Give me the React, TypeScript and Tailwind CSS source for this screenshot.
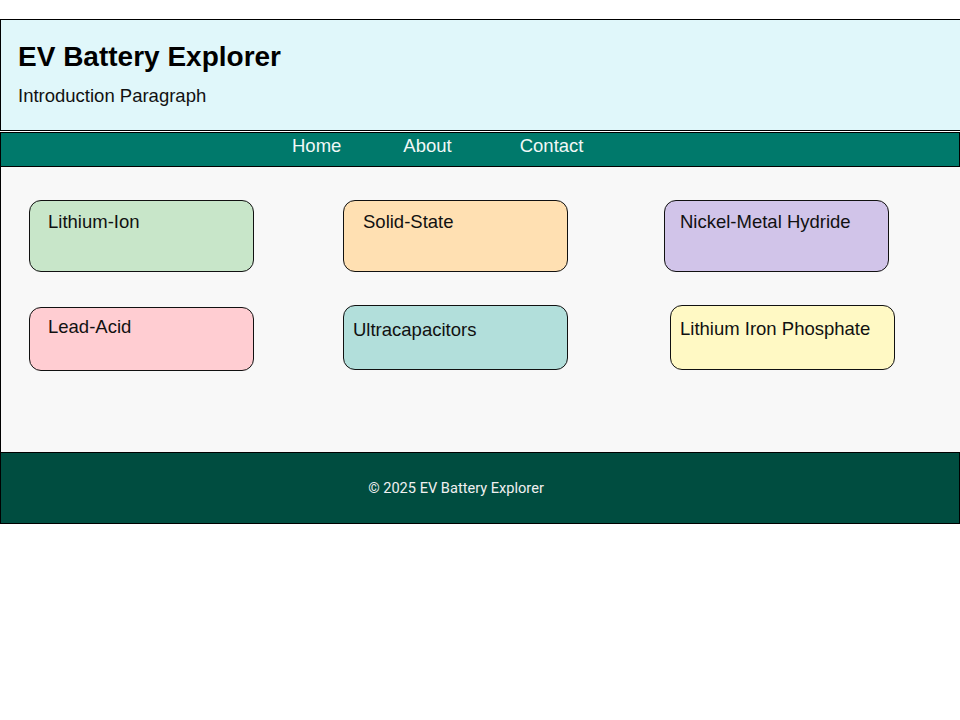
import React from "react";

type Card = { name: string; bg: string; cls: string };

const row1: Card[] = [
  { name: "Lithium-Ion", bg: "bg-[#c8e6c9]", cls: "ml-[28px] h-[72px] pt-[11px] pl-[18px]" },
  { name: "Solid-State", bg: "bg-[#ffe0b2]", cls: "ml-[89px] h-[72px] pt-[11px] pl-[19px]" },
  { name: "Nickel-Metal Hydride", bg: "bg-[#d1c4e9]", cls: "ml-[96px] h-[72px] pt-[11px] pl-[15px]" },
];

const row2: Card[] = [
  { name: "Lead-Acid", bg: "bg-[#ffcdd2]", cls: "ml-[28px] mt-[2px] h-[64px] pt-[9px] pl-[18px]" },
  { name: "Ultracapacitors", bg: "bg-[#b2dfdb]", cls: "ml-[89px] h-[65px] pt-[14px] pl-[9px]" },
  { name: "Lithium Iron Phosphate", bg: "bg-[#fff9c4]", cls: "ml-[102px] h-[65px] pt-[13px] pl-[9px]" },
];

function CardBox({ c }: { c: Card }) {
  return (
    <div
      className={`w-[225px] shrink-0 rounded-[12px] border border-[#111] text-[18.5px] leading-[20px] text-[#111] ${c.bg} ${c.cls}`}
    >
      {c.name}
    </div>
  );
}

export default function App() {
  return (
    <div
      className="w-[960px] pt-[19px] bg-white"
      style={{ fontFamily: '"Liberation Sans", Arial, sans-serif' }}
    >
      <header className="h-[112px] w-[961px] border-t border-l border-b border-black bg-[#e0f7fa] pl-[17px] pt-[21px]">
        <h1 className="text-[28px] leading-[31px] font-bold text-black">EV Battery Explorer</h1>
        <p className="mt-[14px] text-[18.5px] leading-[20px] text-[#111]">Introduction Paragraph</p>
      </header>
      <nav className="mt-[1px] flex h-[35px] items-start border border-black bg-[#00796b] pt-[3px] text-[18.5px] leading-[20px] text-[#f1f8f7]">
        <a className="ml-[291px]">Home</a>
        <a className="ml-[62px]">About</a>
        <a className="ml-[68px]">Contact</a>
      </nav>
      <main className="h-[285px] border-l border-black bg-[#f8f8f8] pt-[33px]">
        <div className="flex items-start">
          {row1.map((c) => (
            <CardBox key={c.name} c={c} />
          ))}
        </div>
        <div className="mt-[33px] flex items-start">
          {row2.map((c) => (
            <CardBox key={c.name} c={c} />
          ))}
        </div>
      </main>
      <footer
        className="flex h-[72px] items-center justify-center border border-black bg-[#004d40] pr-[48px] pt-[2px] text-[14.6px] text-[#f0f0f0]"
        style={{ fontFamily: 'Roboto, "Liberation Sans", sans-serif' }}
      >
        © 2025 EV Battery Explorer
      </footer>
    </div>
  );
}
